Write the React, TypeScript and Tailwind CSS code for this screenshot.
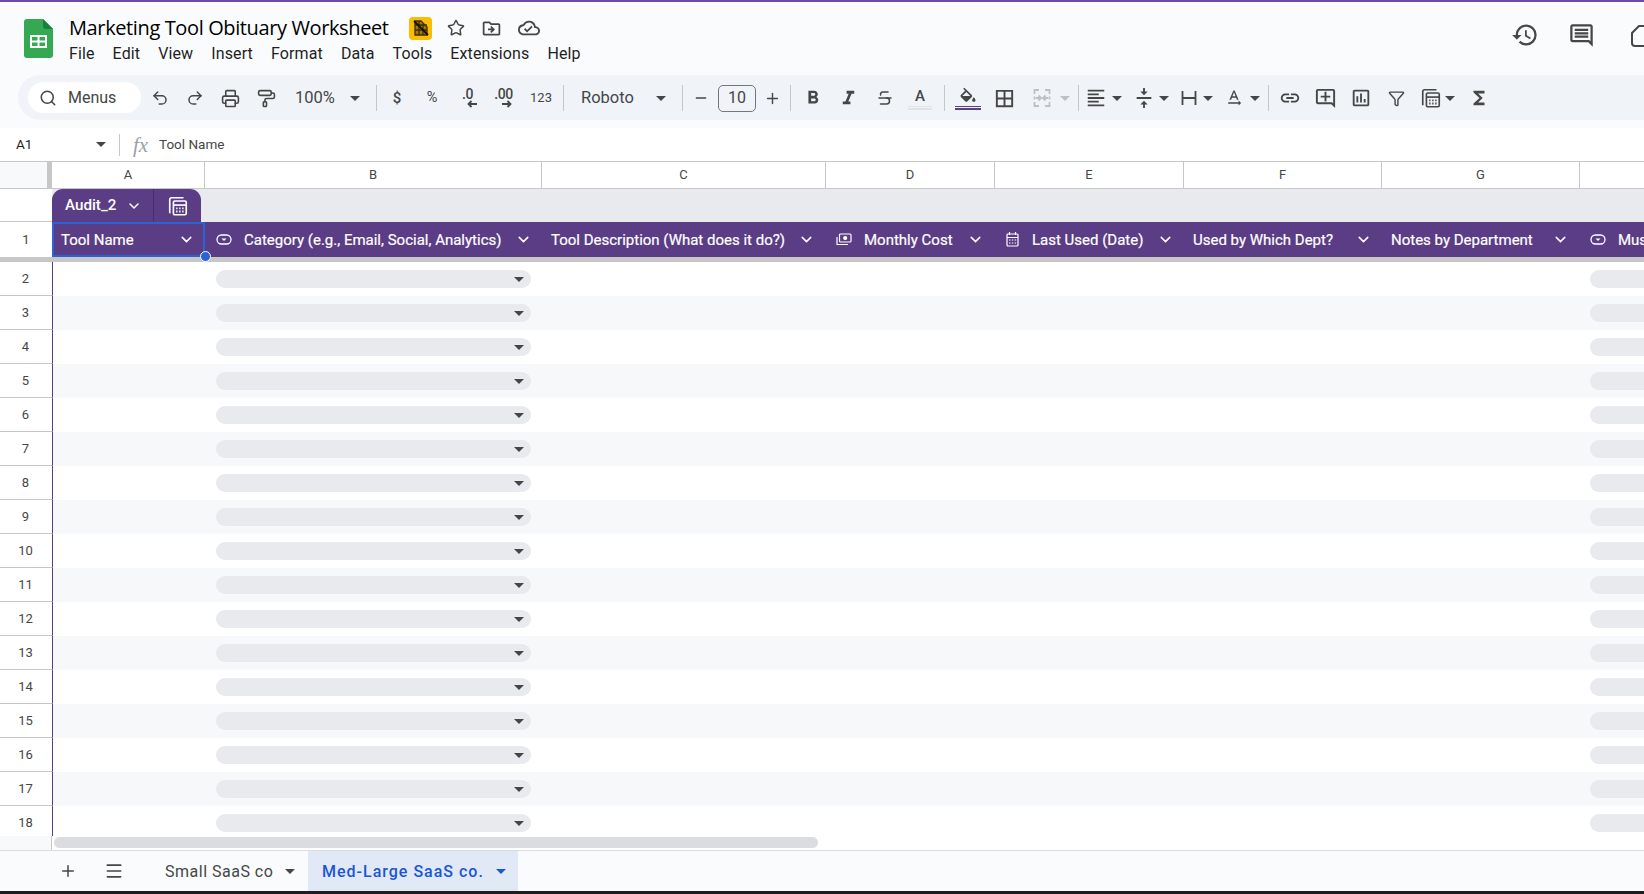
import { ChevronDown, Filter, PaintRoller, Printer, Redo2, Search, Star, Strikethrough, Undo2, Plus, Menu, Minus } from 'lucide-react';
import {
  MdBorderAll,
  MdFormatAlignLeft,
  MdFormatBold,
  MdFormatItalic,
  MdFunctions,
  MdHistory,
  MdLink,
  MdOutlineAddComment,
  MdOutlineCloudDone,
  MdOutlineComment,
  MdOutlineDriveFileMove,
  MdOutlineInsertChart,
  MdTextRotationNone,
  MdVerticalAlignCenter,
} from 'react-icons/md';

const INK = '#444746';
const rows = [2, 3, 4, 5, 6, 7, 8, 9, 10, 11, 12, 13, 14, 15, 16, 17, 18];
const menus = ['File', 'Edit', 'View', 'Insert', 'Format', 'Data', 'Tools', 'Extensions', 'Help'];

function Caret({ className = 'border-t-[#444746]' }: { className?: string }) {
  return <span className={`inline-block h-0 w-0 border-x-[5px] border-t-[5px] border-x-transparent ${className}`} />;
}

function Btn({ className, children }: { className: string; children: React.ReactNode }) {
  return <div className={`flex h-full shrink-0 items-center justify-center pt-[1px] text-[#444746] ${className}`}>{children}</div>;
}

function Divider({ className }: { className: string }) {
  return (
    <div className={`flex h-full shrink-0 items-center justify-center ${className}`}>
      <div className="h-[26px] w-px bg-[#c7c7c7]" />
    </div>
  );
}

function SheetsLogo() {
  return (
    <svg width="29" height="39" viewBox="0 0 29 39">
      <path d="M3 0h16l10 10v26a3 3 0 0 1-3 3H3a3 3 0 0 1-3-3V3a3 3 0 0 1 3-3z" fill="#34a853" />
      <path d="M19 0l10 10h-7a3 3 0 0 1-3-3z" fill="#188038" />
      <path d="M6 16h17v13H6z" fill="#fff" />
      <path d="M8 18h5.500v3.500H8zM15.500 18H21v3.500h-5.500zM8 23.500h5.500V27H8zM15.500 23.500H21V27h-5.500z" fill="#34a853" />
    </svg>
  );
}

function NoEditIcon() {
  return (
    <svg width="18" height="18" viewBox="0 0 18 18" fill="none" stroke="#3c2f00" strokeWidth="1.300">
      <path d="M3 2v14h12V8L9 2z" fill="#a57c00" />
      <path d="M3 6h12M3 11h12M7 2v14M11 5v11" />
      <path d="M2 2l14 14" stroke="#111" strokeWidth="1.800" />
    </svg>
  );
}

function CalcIcon({ color, size }: { color: string; size: number }) {
  return (
    <svg width={size} height={size} viewBox="0 0 24 24" fill="none" stroke={color} strokeWidth="1.800">
      <path d="M3 20V5a2 2 0 0 1 2-2h13" />
      <rect x="7" y="6.500" width="14" height="15" rx="1.500" />
      <path d="M7 11h14" />
      <path d="M10 14.500h1.500M13.300 14.500h1.500M16.600 14.500h1.500M10 18h1.500M13.300 18h1.500M16.600 18h1.500" strokeWidth="2" />
    </svg>
  );
}

function MergeIcon() {
  return (
    <svg width="20" height="20" viewBox="0 0 20 20" fill="none" stroke="#bdc1c6" strokeWidth="1.800">
      <path d="M7 2H2.500v4M2.500 8.500v3M2.500 14v4H7M13 2h4.500v4M17.500 8.500v3M17.500 14v4H13" />
      <path d="M4 10h4M6.500 7.500L9 10l-2.500 2.500M16 10h-4M13.500 7.500L11 10l2.500 2.500" />
    </svg>
  );
}

function WrapIcon() {
  return (
    <svg width="16" height="18" viewBox="0 0 16 18" fill="none" stroke={INK} strokeWidth="1.800">
      <path d="M1.500 2v14M14.500 2v14M1.500 9h13" />
    </svg>
  );
}

function FillIcon() {
  return (
    <div className="flex flex-col items-center">
      <svg width="20" height="18" viewBox="0 0 24 20" fill={INK}>
        <path d="M16.560 8.940L7.620 0 6.210 1.410l2.380 2.380-5.150 5.150c-.59.59-.59 1.540 0 2.120l5.500 5.500c.29.29.68.44 1.060.44s.77-.15 1.060-.44l5.500-5.500c.59-.58.59-1.530 0-2.120zM5.210 10L10 5.210 14.790 10H5.210zM19 11.500s-2 2.170-2 3.500c0 1.100.9 2 2 2s2-.9 2-2c0-1.330-2-3.500-2-3.500z" />
      </svg>
      <div className="mt-[1px] h-[1.500px] w-[26px] bg-[#5b3e86]" />
      <div className="mt-[1px] h-[1.500px] w-[26px] bg-[#5b3e86]" />
    </div>
  );
}

function ChipIcon() {
  return (
    <svg width="16" height="12" viewBox="0 0 16 12" fill="none" stroke="#fff" strokeWidth="1.300">
      <rect x="1" y="1" width="14" height="9" rx="4.500" />
      <path d="M5.500 4.500l2.500 2.500 2.500-2.500" fill="#fff" stroke="none" />
    </svg>
  );
}

function MoneyIcon() {
  return (
    <svg width="16" height="13" viewBox="0 0 16 13" fill="none" stroke="#fff" strokeWidth="1.200">
      <rect x="3.500" y="1" width="11.500" height="8" rx="1" />
      <path d="M1 4v7.500h11" />
      <circle cx="9.200" cy="5" r="1.500" fill="#fff" />
    </svg>
  );
}

function CalendarIcon() {
  return (
    <svg width="13" height="15" viewBox="0 0 13 15" fill="none" stroke="#fff" strokeWidth="1.200">
      <rect x="1" y="2" width="11" height="12" rx="1" />
      <path d="M1 5.500h11M3.500 0v3M9.500 0v3" />
      <path d="M3 8h1.500M5.800 8h1.500M8.600 8h1.500M3 11h1.500M5.800 11h1.500M8.600 11h1.500" />
    </svg>
  );
}

function DecimalIcon({ label, right }: { label: string; right?: boolean }) {
  return (
    <div className="flex h-[26px] w-[28px] flex-col items-center">
      <span className="text-[14px] font-medium leading-[18px] tracking-[-0.5px] text-[#444746]">{label}</span>
      <svg className={right ? 'ml-[6px] mt-[-3px]' : 'ml-[8px] mt-[-3px]'} width="10" height="8" viewBox="0 0 10 8" fill="none" stroke={INK} strokeWidth="1.800">
        {right ? <path d="M0 4h8M5.500 1L8.500 4 5.500 7" /> : <path d="M10 4H2M4.500 1L1.500 4l3 3" />}
      </svg>
    </div>
  );
}

function Header() {
  return (
    <div className="flex h-[73px] shrink-0 items-start pl-[24px]">
      <div className="mt-[17px]">
        <SheetsLogo />
      </div>
      <div className="ml-[16px] flex flex-col">
        <div className="mt-[13px] flex h-[26px] items-center">
          <span className="w-[340px] whitespace-nowrap text-[20px] leading-[26px] tracking-[-0.38px] text-black [font-family:'Open_Sans',sans-serif]">Marketing Tool Obituary Worksheet</span>
          <div className="flex h-[23px] w-[23px] items-center justify-center rounded-[4px] bg-[#fbbc04]">
            <NoEditIcon />
          </div>
          <Star className="ml-[15px] h-[18px] w-[18px] text-[#444746]" strokeWidth={2} />
          <MdOutlineDriveFileMove className="ml-[16px] text-[#444746]" size={21} />
          <MdOutlineCloudDone className="ml-[16px] text-[#444746]" size={22} />
        </div>
        <div className="mt-[2px] flex gap-[18px] text-[16px] leading-[22px] tracking-[0.12px] text-[#1f1f1f]">
          {menus.map((m) => (
            <span key={m}>{m}</span>
          ))}
        </div>
      </div>
      <div className="ml-auto mr-[-11px] mt-[19px] flex items-center">
        <MdHistory className="text-[#444746]" size={28} />
        <MdOutlineComment className="ml-[29px] text-[#444746]" size={27} />
        <svg className="ml-[36px] mt-[1px]" width="24" height="22" viewBox="0 0 24 22" fill="none" stroke={INK} strokeWidth="2">
          <path d="M8 1h14v20H4a3 3 0 0 1-3-3V8z" />
        </svg>
      </div>
    </div>
  );
}

function Toolbar() {
  return (
    <div className="ml-[18px] flex h-[45px] shrink-0 items-center rounded-l-[22px] bg-[#f0f4f9] pl-[10px]">
      <div className="flex h-[31px] w-[113px] items-center rounded-full bg-white pl-[11px] text-[16px] leading-[32px] text-[#444746]">
        <Search className="h-[18px] w-[18px]" strokeWidth={2} />
        <span className="ml-[11px]">Menus</span>
      </div>
      <Btn className="ml-[2px] w-[34px]"><Undo2 className="h-[18px] w-[18px]" strokeWidth={2} /></Btn>
      <Btn className="w-[35px]"><Redo2 className="h-[18px] w-[18px]" strokeWidth={2} /></Btn>
      <Btn className="w-[37px]"><Printer className="h-[19px] w-[19px]" strokeWidth={2} /></Btn>
      <Btn className="w-[34px]"><PaintRoller className="h-[19px] w-[19px]" strokeWidth={2} /></Btn>
      <Btn className="w-[89px] justify-start pl-[12px] text-[16.500px]">
        100%
        <Caret className="ml-[15px] border-t-[#444746]" />
      </Btn>
      <Divider className="w-[8px]" />
      <Btn className="w-[34px] text-[15px] font-medium">$</Btn>
      <Btn className="w-[36px] text-[14.500px]">%</Btn>
      <Btn className="w-[35px]"><DecimalIcon label=".0" /></Btn>
      <Btn className="w-[37px]"><DecimalIcon label=".00" right /></Btn>
      <Btn className="w-[38px] text-[13px]">123</Btn>
      <Divider className="w-[7px]" />
      <Btn className="w-[111px] justify-start pl-[14px] text-[16.500px]">
        Roboto
        <Caret className="ml-[22px] border-t-[#444746]" />
      </Btn>
      <Divider className="w-[9px]" />
      <Btn className="w-[27px]"><Minus className="h-[16px] w-[16px]" strokeWidth={2} /></Btn>
      <Btn className="w-[46px]">
        <div className="flex h-[27px] w-[38px] items-center justify-center rounded-[5px] border border-[#747775] text-[16px] text-[#444746]">10</div>
      </Btn>
      <Btn className="w-[25px]"><Plus className="h-[17px] w-[17px]" strokeWidth={2} /></Btn>
      <Divider className="w-[11px]" />
      <Btn className="w-[34px]"><MdFormatBold size={22} /></Btn>
      <Btn className="w-[36px]"><MdFormatItalic size={23} /></Btn>
      <Btn className="w-[36px] pl-[1px]"><Strikethrough className="h-[18px] w-[18px]" strokeWidth={2} /></Btn>
      <Btn className="w-[36px]">
        <div className="flex flex-col items-center">
          <span className="text-[15px] font-medium leading-[18px]">A</span>
          <div className="mt-[1px] h-[1.500px] w-[24px] bg-[#e3e3e3]" />
          <div className="mt-[1px] h-[1.500px] w-[24px] bg-[#e3e3e3]" />
        </div>
      </Btn>
      <Divider className="w-[12px]" />
      <Btn className="w-[35px]"><FillIcon /></Btn>
      <Btn className="w-[39px]"><MdBorderAll size={23} /></Btn>
      <Btn className="w-[52px] justify-start pl-[8px]">
        <MergeIcon />
        <Caret className="ml-[8px] border-t-[#bdc1c6]" />
      </Btn>
      <Divider className="w-[5px]" />
      <Btn className="w-[44px]">
        <MdFormatAlignLeft size={22} />
        <Caret className="ml-[5px] border-t-[#444746]" />
      </Btn>
      <Btn className="w-[45px] pl-[6px]">
        <MdVerticalAlignCenter size={22} />
        <Caret className="ml-[4px] border-t-[#444746]" />
      </Btn>
      <Btn className="w-[45px] pl-[9px]">
        <WrapIcon />
        <Caret className="ml-[6px] border-t-[#444746]" />
      </Btn>
      <Btn className="w-[47px] pl-[6px]">
        <MdTextRotationNone size={20} />
        <Caret className="ml-[6px] border-t-[#444746]" />
      </Btn>
      <Divider className="w-[12px]" />
      <Btn className="w-[32px]"><MdLink size={22} /></Btn>
      <Btn className="w-[38px]"><MdOutlineAddComment size={23} /></Btn>
      <Btn className="w-[34px]"><MdOutlineInsertChart size={22} /></Btn>
      <Btn className="w-[37px]"><Filter className="h-[17px] w-[17px]" strokeWidth={2} /></Btn>
      <Btn className="w-[47px] pr-[2px]">
        <CalcIcon color={INK} size={22} />
        <Caret className="ml-[3px] border-t-[#444746]" />
      </Btn>
      <Btn className="w-[34px]"><MdFunctions size={22} /></Btn>
    </div>
  );
}

function FormulaBar() {
  return (
    <div className="mt-[8px] flex h-[33px] shrink-0 items-center bg-white text-[13.500px] text-[#1f1f1f]">
      <span className="ml-[16px] w-[80px]">A1</span>
      <Caret className="border-t-[#444746]" />
      <div className="ml-[13px] h-[22px] w-px bg-[#c7c7c7]" />
      <span className="ml-[13px] w-[26px] font-['Liberation_Serif',serif] text-[21px] italic leading-[20px] text-[#9aa0a6]">fx</span>
      <span className="text-[#444746]">Tool Name</span>
    </div>
  );
}

function ColumnHeaders() {
  return (
    <div className="flex h-[28px] shrink-0 border-y border-[#c7c7c7] bg-white text-[13px] text-[#444746]">
      <div className="flex w-[52px] shrink-0 justify-end bg-[#f8f9fa]">
        <div className="w-[5px] bg-[#c7c7c7]" />
      </div>
      <div className="flex w-[153px] shrink-0 items-center justify-center border-r border-[#c7c7c7]">A</div>
      <div className="flex w-[337px] shrink-0 items-center justify-center border-r border-[#c7c7c7]">B</div>
      <div className="flex w-[284px] shrink-0 items-center justify-center border-r border-[#c7c7c7]">C</div>
      <div className="flex w-[169px] shrink-0 items-center justify-center border-r border-[#c7c7c7]">D</div>
      <div className="flex w-[189px] shrink-0 items-center justify-center border-r border-[#c7c7c7]">E</div>
      <div className="flex w-[198px] shrink-0 items-center justify-center border-r border-[#c7c7c7]">F</div>
      <div className="flex w-[198px] shrink-0 items-center justify-center border-r border-[#c7c7c7]">G</div>
      <div className="flex-1" />
    </div>
  );
}

function TableHeaderCell({ className, icon, label, pad }: { className: string; icon?: React.ReactNode; label: string; pad: string }) {
  return (
    <div className={`flex h-full shrink-0 items-center justify-between ${pad} ${className}`}>
      <div className="flex items-center whitespace-nowrap">
        {icon}
        <span className="mt-[2px]">{label}</span>
      </div>
      <ChevronDown className="h-[17px] w-[17px] shrink-0" strokeWidth={2.200} />
    </div>
  );
}

function TableTop() {
  return (
    <>
      <div className="flex h-[33px] shrink-0">
        <div className="w-[52px] shrink-0 border-b border-[#c7c7c7] bg-white" />
        <div className="flex flex-1 items-end bg-[#e8eaed]">
          <div className="flex h-[33px] w-[149px] items-center rounded-t-[11px] bg-[#5a3d85] text-[15.200px] font-medium text-white">
            <div className="flex h-full w-[102px] items-center border-r border-[#46306a] pl-[13px]">
              Audit_2
              <ChevronDown className="ml-[10px] h-[16px] w-[16px]" strokeWidth={2.200} />
            </div>
            <div className="flex flex-1 items-center justify-center">
              <CalcIcon color="#fff" size={22} />
            </div>
          </div>
        </div>
      </div>
      <div className="flex h-[35px] shrink-0">
        <div className="flex w-[52px] shrink-0 items-center justify-center bg-white text-[13px] text-[#444746]">1</div>
        <div className="flex flex-1 overflow-hidden bg-[#5a3d85] text-[15px] font-normal text-white [-webkit-text-stroke:0.2px_#fff]">
          <div className="relative flex h-full w-[153px] shrink-0 items-center justify-between pl-[9px] pr-[10px]">
            <span className="mt-[2px]">Tool Name</span>
            <ChevronDown className="h-[17px] w-[17px]" strokeWidth={2.200} />
            <div className="absolute inset-0 border-2 border-[#2a63d6]" />
          </div>
          <TableHeaderCell className="w-[337px]" pad="pl-[11px] pr-[10px]" icon={<span className="mr-[12px] flex"><ChipIcon /></span>} label="Category (e.g., Email, Social, Analytics)" />
          <TableHeaderCell className="w-[284px]" pad="pl-[9px] pr-[11px]" label="Tool Description (What does it do?)" />
          <TableHeaderCell className="w-[169px]" pad="pl-[10px] pr-[11px]" icon={<span className="mr-[12px] flex"><MoneyIcon /></span>} label="Monthly Cost" />
          <TableHeaderCell className="w-[189px]" pad="pl-[11px] pr-[10px]" icon={<span className="mr-[13px] flex"><CalendarIcon /></span>} label="Last Used (Date)" />
          <TableHeaderCell className="w-[198px]" pad="pl-[9px] pr-[10px]" label="Used by Which Dept?" />
          <TableHeaderCell className="w-[198px]" pad="pl-[9px] pr-[11px]" label="Notes by Department" />
          <div className="flex items-center whitespace-nowrap pl-[10px]">
            <span className="mr-[12px] flex"><ChipIcon /></span>
            <span className="mt-[2px]">Must Keep?</span>
          </div>
        </div>
      </div>
    </>
  );
}

function Pill({ className, arrow }: { className: string; arrow?: boolean }) {
  return (
    <div className={`flex h-[18px] items-center justify-end rounded-full bg-[#e8eaed] pr-[7px] ${className}`}>
      {arrow && <Caret className="border-t-[#444746]" />}
    </div>
  );
}

function DataRow({ n }: { n: number }) {
  return (
    <div className="flex h-[34px] shrink-0">
      <div className="flex w-[53px] shrink-0 items-center justify-center border-b border-r border-b-[#c7c7c7] border-r-[#5a3d85] bg-white pr-[1px] text-[13px] text-[#444746]">{n}</div>
      <div className={`flex flex-1 items-center overflow-hidden ${n % 2 === 1 ? 'bg-[#f7f8fa]' : 'bg-white'}`}>
        <Pill className="ml-[163px] w-[315px] shrink-0" arrow />
        <Pill className="ml-[1059px] w-[80px] shrink-0" />
      </div>
    </div>
  );
}

function Footer() {
  return (
    <>
      <div className="flex h-[14px] shrink-0 bg-white">
        <div className="w-[52px] shrink-0 border-r border-[#c7c7c7] bg-[#f8f9fa]" />
        <div className="ml-[2px] mt-[1px] h-[10.500px] w-[764px] rounded-full bg-[#dadce0]" />
      </div>
      <div className="flex h-[41px] shrink-0 border-t border-[#dadce0] bg-[#f9fbfd] text-[16px] tracking-[0.5px]">
        <Plus className="ml-[59px] h-[18px] w-[18px] self-center text-[#444746]" strokeWidth={2} />
        <Menu className="ml-[27px] h-[20px] w-[20px] self-center text-[#444746]" strokeWidth={2} />
        <div className="ml-[41px] flex w-[143px] items-center pt-[1px] text-[#444746]">
          Small SaaS co
          <Caret className="ml-[12px] border-t-[#444746]" />
        </div>
        <div className="flex w-[210px] items-center bg-[#e1e9f7] pl-[14px] pt-[1px] font-medium tracking-[1px] text-[#1a56d6]">
          Med-Large SaaS co.
          <Caret className="ml-[12px] border-t-[#1a56d6]" />
        </div>
      </div>
      <div className="h-[3px] shrink-0 bg-[#1e1e1e]" />
    </>
  );
}

export default function App() {
  return (
    <div className="flex h-[894px] w-[1644px] flex-col overflow-hidden bg-[#f9fbfd] [font-family:Roboto,sans-serif]">
      <div className="h-[2px] shrink-0 bg-[#6b4ca5]" />
      <Header />
      <Toolbar />
      <FormulaBar />
      <ColumnHeaders />
      <div className="relative flex shrink-0 flex-col">
        <TableTop />
        {/* fill handle of the selected cell */}
        <div className="absolute left-[200px] top-[62px] h-[11px] w-[11px] rounded-full border border-white bg-[#2a63d6]" />
      </div>
      <div className="flex h-[5px] shrink-0 bg-[#c7c7c7]" />
      <div className="flex flex-1 flex-col overflow-hidden bg-white">
        {rows.map((n) => (
          <DataRow key={n} n={n} />
        ))}
      </div>
      <Footer />
    </div>
  );
}
